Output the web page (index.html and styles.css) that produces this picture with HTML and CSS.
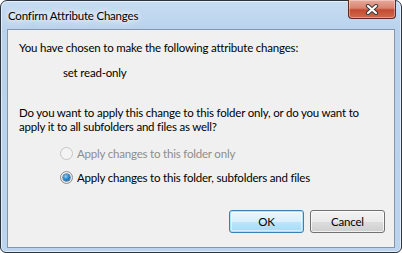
FILE: index.html
```html
<!DOCTYPE html>
<html>
<head>
<meta charset="utf-8">
<link rel="stylesheet" href="styles.css">
</head>
<body>
<div class="window">
  <div class="titlebar">
    <span class="title">Confirm Attribute Changes</span>
    <div class="close">
      <svg width="14" height="11" viewBox="0 0 14 11">
        <path d="M3 2 L11 9 M11 2 L3 9" stroke="#3a3a3a" stroke-width="4.2" stroke-linecap="round" fill="none"/>
        <path d="M3 2 L11 9 M11 2 L3 9" stroke="#ffffff" stroke-width="2.2" stroke-linecap="round" fill="none"/>
      </svg>
    </div>
  </div>
  <div class="client">
    <p class="line first">You have chosen to make the following attribute changes:</p>
    <p class="line change">set read-only</p>
    <p class="line question">Do you want to apply this change to this folder only, or do you want to<br>apply it to all subfolders and files as well?</p>
    <div class="options">
      <label class="option disabled"><span class="radio"></span>Apply changes to this folder only</label>
      <label class="option"><span class="radio checked"><span class="dot"></span></span>Apply changes to this folder, subfolders and files</label>
    </div>
    <div class="buttons">
      <button class="btn default">OK</button>
      <button class="btn">Cancel</button>
    </div>
  </div>
</div>
</body>
</html>
```
FILE: styles.css
```css
html, body {
  margin: 0;
  padding: 0;
  background: #ffffff;
}
body {
  font-family: "Lato", "Noto Sans", sans-serif;
  font-size: 11.5px;
  letter-spacing: -0.2px;
  color: #000;
}
.window {
  width: 402px;
  height: 253px;
  box-sizing: border-box;
  border: 1px solid #2a3340;
  border-radius: 7px 7px 6px 6px;
  background: linear-gradient(180deg, #c6dcf2 0%, #b9d2ec 12%, #bcd4ee 100%);
  padding: 0 6px 4px 6px;
  display: flex;
  flex-direction: column;
  box-shadow: inset 0 0 0 1px rgba(255,255,255,0.6);
}
.titlebar {
  height: 28px;
  display: flex;
  align-items: flex-start;
  justify-content: space-between;
}
.title {
  margin-top: 7px;
  margin-left: 1px;
  line-height: 16px;
  color: #000;
  text-shadow: 0 0 8px #fff, 0 0 12px #fff, 0 0 4px rgba(255,255,255,0.9);
}
.close {
  margin-top: -1px;
  margin-right: -1px;
  width: 48px;
  height: 19px;
  box-sizing: border-box;
  border: 1px solid #5b2b25;
  border-top: none;
  border-radius: 0 0 4px 4px;
  background: linear-gradient(180deg, #e9a99a 0%, #d88470 45%, #c54a32 55%, #cf6a4c 100%);
  box-shadow: inset 0 0 0 1px rgba(255,255,255,0.35);
  display: flex;
  align-items: center;
  justify-content: center;
}
.close svg {
  display: block;
}
.client {
  flex: 1;
  background: #f0f0f0;
  border: 1px solid #8496ab;
  padding: 10px 11px 0 11px;
  display: flex;
  flex-direction: column;
}
.line {
  margin: 0;
  line-height: 15px;
  white-space: nowrap;
}
.change {
  margin-top: 10px;
  padding-left: 44px;
}
.question {
  margin-top: 26px;
  line-height: 14px;
}
.options {
  margin-top: 12px;
  padding-left: 41px;
  display: flex;
  flex-direction: column;
  gap: 9px;
}
.option {
  display: flex;
  align-items: center;
  line-height: 15px;
  white-space: nowrap;
}
.option.disabled {
  color: #8d8d8d;
}
.radio {
  width: 13px;
  height: 13px;
  box-sizing: border-box;
  border-radius: 50%;
  border: 1px solid #8f8f8f;
  background: radial-gradient(circle at 40% 35%, #ffffff 0%, #e6e6e6 70%, #d2d2d2 100%);
  margin-right: 4px;
  display: flex;
  align-items: center;
  justify-content: center;
}
.disabled .radio {
  border-color: #c5c5c5;
  background: #f4f4f4;
}
.dot {
  width: 7px;
  height: 7px;
  border-radius: 50%;
  background: radial-gradient(circle at 40% 35%, #8fd0f5 0%, #2a8ad0 45%, #0d4c87 100%);
  box-shadow: 0 0 0 0.5px #1b3b5c;
}
.buttons {
  margin-top: auto;
  margin-bottom: 14px;
  margin-right: -2px;
  display: flex;
  justify-content: flex-end;
  gap: 6px;
}
.btn {
  width: 75px;
  height: 23px;
  box-sizing: border-box;
  border: 1px solid #707070;
  border-radius: 3px;
  background: linear-gradient(180deg, #f2f2f2 0%, #ebebeb 50%, #dddddd 51%, #cfcfcf 100%);
  box-shadow: inset 0 0 0 1px rgba(255,255,255,0.7);
  font-family: "Lato", "Noto Sans", sans-serif;
  font-size: 11.5px;
  letter-spacing: -0.2px;
  color: #000;
  padding: 0;
}
.btn.default {
  border-color: #3c7fb1;
  background: linear-gradient(180deg, #eaf6fd 0%, #d9f0fc 50%, #bee6fd 51%, #a7d9f5 100%);
  box-shadow: inset 0 0 0 1px #aee1fb, inset 0 0 0 2px rgba(255,255,255,0.5);
}
```
